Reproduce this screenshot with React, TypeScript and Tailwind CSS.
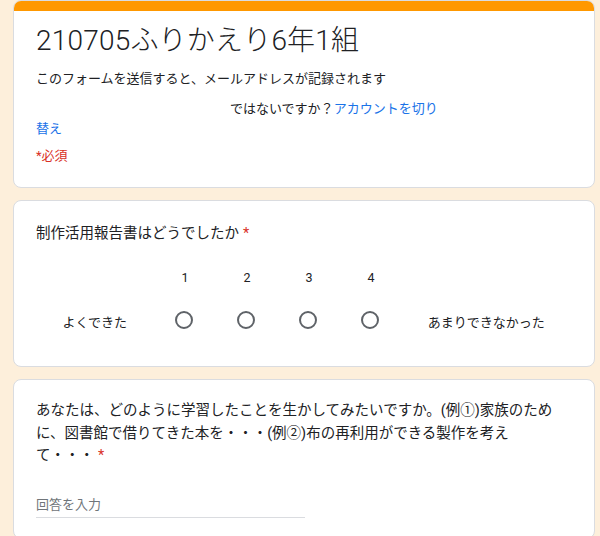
const FONT = "font-['Roboto','Noto_Sans_CJK_JP',sans-serif]";

const scale = [1, 2, 3, 4];

function Card({ children, className = "" }: { children: React.ReactNode; className?: string }) {
  return (
    <div className={`w-[582px] rounded-lg border border-[#dadce0] bg-white ${className}`}>
      {children}
    </div>
  );
}

export default function App() {
  return (
    <div className={`min-h-[536px] bg-[#fdefdb] pl-[13px] text-[#202124] ${FONT}`}>
      <div className="flex flex-col gap-[12px]">
        {/* header card */}
        <Card className="overflow-hidden">
          <div className="h-[10px] bg-[#ff9800]" />
          <div className="px-[22px] pt-[12px] pb-[21px]">
            <h1 className="text-[28px] leading-[36px] font-light tracking-[0.2px]">210705ふりかえり6年1組</h1>
            <p className="mt-[10px] text-[13px] leading-[20px]">
              このフォームを送信すると、メールアドレスが記録されます
            </p>
            <p className="mt-[10px] w-[410px] indent-[194px] text-[13px] leading-[20px]">
              ではないですか？
              <span className="text-[#1a73e8]">アカウントを切り替え</span>
            </p>
            <p className="mt-[7px] text-[13px] leading-[20px] text-[#d93025]">*必須</p>
          </div>
        </Card>

        {/* linear scale question */}
        <Card className="px-[22px] pt-[21px] pb-[22px]">
          <div className="text-[14.5px] leading-[24px]">
            制作活用報告書はどうでしたか<span className="ml-1 text-[#d93025]">*</span>
          </div>
          <div className="mt-[20px] flex">
            <div className="w-[118px]" />
            {scale.map((n) => (
              <div key={n} className="w-[62px] text-center text-[12.5px] leading-[24px]">
                {n}
              </div>
            ))}
          </div>
          <div className="mt-[6px] flex h-[48px] items-center">
            <div className="w-[118px] pt-[5px] text-center text-[13px]">よくできた</div>
            {scale.map((n) => (
              <div key={n} className="flex w-[62px] justify-center">
                <div className="h-[18px] w-[18px] rounded-full border-2 border-[#5f6368]" />
              </div>
            ))}
            <div className="w-[172px] pt-[5px] text-center text-[13px]">あまりできなかった</div>
          </div>
        </Card>

        {/* text question */}
        <Card className="px-[22px] pt-[20px] pb-[20px]">
          <div className="text-[14.5px] leading-[22.5px]">
            あなたは、どのように学習したことを生かしてみたいですか。(例①)家族のため
            <br />
            に、図書館で借りてきた本を・・・(例②)布の再利用ができる製作を考え
            <br />
            て・・・<span className="ml-1 text-[#d93025]">*</span>
          </div>
          <div className="mt-[27px] w-[269px] border-b border-[#dadce0] pb-[2px] text-[13px] leading-[20px] text-[#70757a]">
            回答を入力
          </div>
        </Card>
      </div>
    </div>
  );
}
